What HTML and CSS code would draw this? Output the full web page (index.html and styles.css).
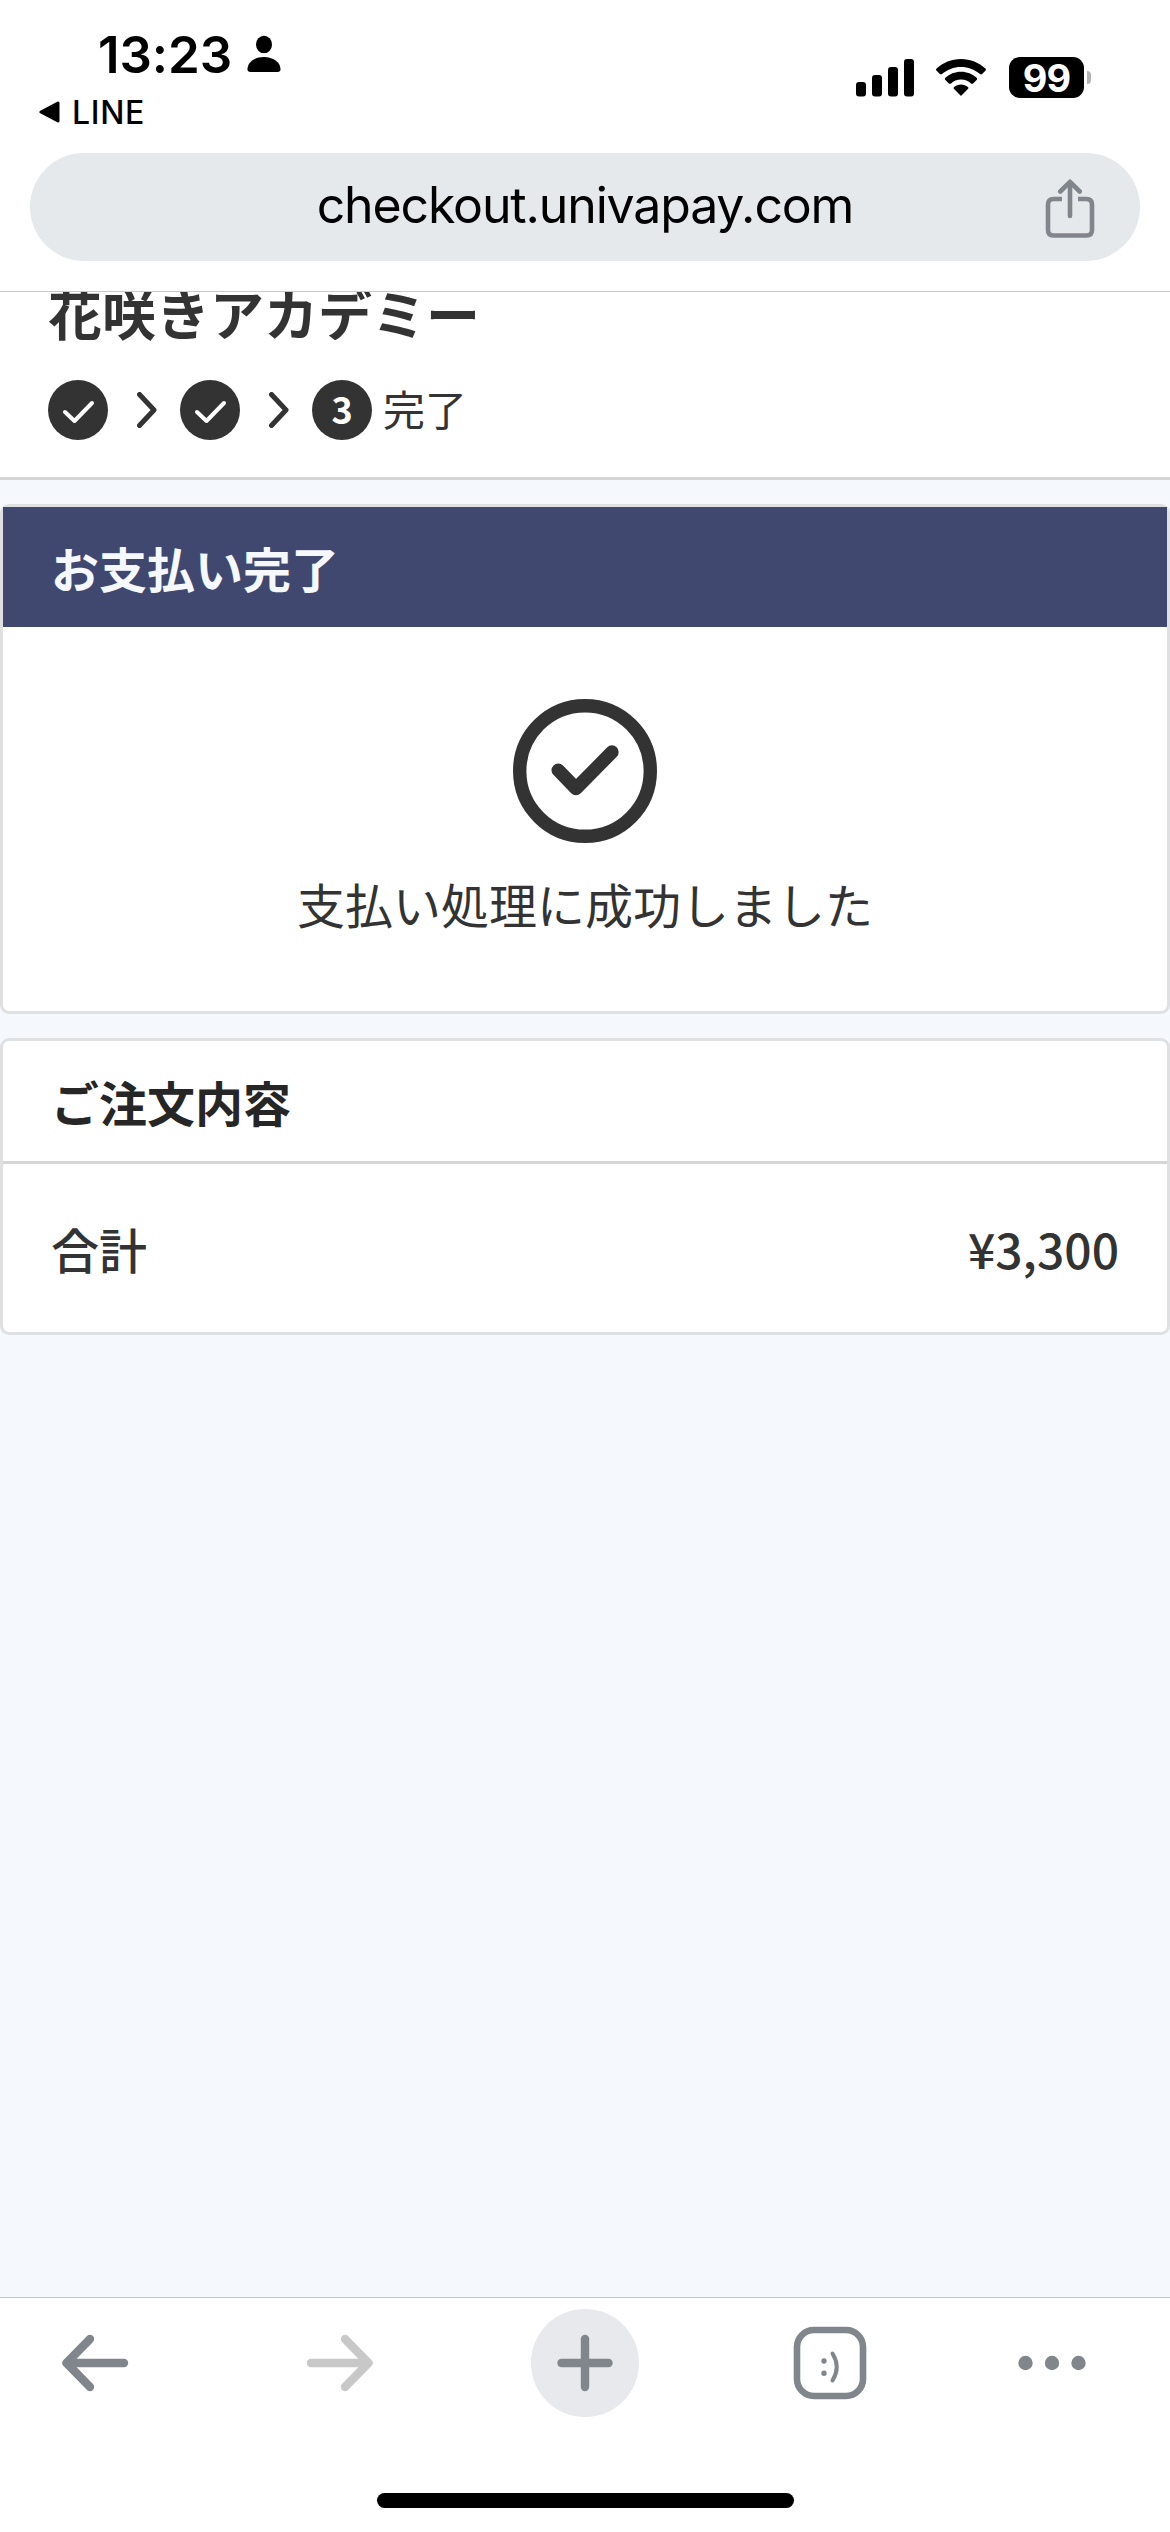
FILE: index.html
```html
<!DOCTYPE html>
<html lang="ja">
  <head>
    <meta charset="UTF-8" />
    <meta name="viewport" content="width=device-width, initial-scale=1.0" />
    <title>お支払い完了</title>
    <link rel="stylesheet" href="styles.css">
  </head>
  <body>
    <div class="screen">
      <div class="browser-top">
        <div class="status-bar">
          <div class="status-left">
            <div class="clock">
              <span class="time">13:23</span>
              <svg class="person" width="34" height="38" viewBox="0 0 34 38">
                <ellipse cx="17" cy="9.5" rx="8" ry="8.8" />
                <path d="M3.5 37C1.5 37 .5 36 .5 34.3C.5 27 8 22 17 22s16.500 5 16.500 12.300c0 1.700-1 2.700-3 2.700z" />
              </svg>
            </div>
            <div class="back-app">
              <svg width="22" height="22" viewBox="0 0 22 22">
                <path d="M2 11L19 2v18z" stroke="#000" stroke-width="3" stroke-linejoin="round" />
              </svg>
              <span>LINE</span>
            </div>
          </div>
          <div class="status-right">
            <svg class="signal" width="58" height="38" viewBox="0 0 58 38">
              <rect x="0" y="23" width="10" height="14.5" rx="3" />
              <rect x="16" y="16" width="10" height="21.5" rx="3" />
              <rect x="32" y="8" width="10" height="29.5" rx="3" />
              <rect x="48" y="0" width="10" height="37.5" rx="3" />
            </svg>
            <svg class="wifi" width="50" height="38" viewBox="0 0 50 38">
              <path d="M25 0C15.500 0 7 3.600.6 9.600c-.7.700-.7 1.500 0 2.200l3.300 3.300c.6.600 1.400.6 2.100 0C11 10.500 17.700 7.900 25 7.900s14 2.600 19 7.200c.7.600 1.500.6 2.100 0l3.300-3.300c.7-.7.7-1.500 0-2.200C43 3.600 34.500 0 25 0z" />
              <path d="M25 12.700c-6 0-11.500 2.300-15.600 6-.7.700-.7 1.500 0 2.200l3.500 3.500c.6.600 1.400.6 2.100 0 2.600-2.300 6.100-3.800 10-3.800s7.400 1.500 10 3.800c.7.600 1.500.6 2.100 0l3.500-3.500c.7-.7.7-1.500 0-2.200-4.100-3.700-9.600-6-15.600-6z" />
              <path d="M25 25.500c-2.600 0-5 .9-6.900 2.400-.7.600-.7 1.400 0 2.100l5.900 6.100c.6.700 1.400.7 2 0l5.900-6.100c.7-.7.7-1.500 0-2.100-1.900-1.500-4.300-2.400-6.900-2.400z" />
            </svg>
            <div class="battery">
              <span class="battery-level">99</span>
              <span class="battery-tip"></span>
            </div>
          </div>
        </div>
        <div class="url-bar">
          <span class="url">checkout.univapay.com</span>
          <svg class="share" width="50" height="60" viewBox="0 0 50 60">
            <path d="M17 20H8.500q-5.500 0-5.500 5.500v25.500q0 5.500 5.500 5.500h33q5.500 0 5.500-5.500V25.500q0-5.500-5.500-5.500H33" />
            <path d="M25 37V3.500M15.300 12.500L25 2.800l9.700 9.700" stroke-linecap="round" stroke-linejoin="round" />
          </svg>
        </div>
      </div>

      <div class="page">
        <div class="shop-header">
          <h1>花咲きアカデミー</h1>
          <div class="steps">
            <span class="step">
              <svg width="60" height="60" viewBox="0 0 60 60"><path d="M17 32l9.500 9L44 23" /></svg>
            </span>
            <svg class="chevron" width="20" height="36" viewBox="0 0 20 36"><path d="M2.500 2.500L17 18 2.500 33.500" /></svg>
            <span class="step">
              <svg width="60" height="60" viewBox="0 0 60 60"><path d="M17 32l9.500 9L44 23" /></svg>
            </span>
            <svg class="chevron" width="20" height="36" viewBox="0 0 20 36"><path d="M2.500 2.500L17 18 2.500 33.500" /></svg>
            <span class="step">3</span>
            <span class="step-name">完了</span>
          </div>
        </div>

        <div class="card">
          <h2 class="card-title primary">お支払い完了</h2>
          <div class="result">
            <svg width="144" height="144" viewBox="0 0 144 144">
              <circle cx="72" cy="72" r="65.3" />
              <path d="M45.200 71.200L63 89.500l36-36.500" />
            </svg>
            <p>支払い処理に成功しました</p>
          </div>
        </div>

        <div class="card">
          <h2 class="card-title">ご注文内容</h2>
          <div class="total">
            <span>合計</span>
            <span class="price">¥3,300</span>
          </div>
        </div>
      </div>

      <div class="toolbar">
        <div class="tools">
          <svg class="back" width="68" height="60" viewBox="0 0 68 60">
            <path d="M63 30H6M29 6L5.500 30 29 54" />
          </svg>
          <svg class="forward" width="68" height="60" viewBox="0 0 68 60">
            <path d="M5 30h57M39 6l23.500 24L39 54" />
          </svg>
          <div class="new-tab">
            <svg width="56" height="58" viewBox="0 0 56 58">
              <path d="M4.500 29h47M28 5v48" />
            </svg>
          </div>
          <svg class="tabs" width="74" height="74" viewBox="0 0 74 74">
            <rect x="4" y="4" width="66" height="66" rx="17" />
            <path d="M39.500 27.500q8.500 13.500 0 27" />
            <circle cx="31" cy="35" r="2.700" />
            <circle cx="31" cy="47.300" r="2.700" />
          </svg>
          <svg class="more" width="68" height="16" viewBox="0 0 68 16">
            <circle cx="7.500" cy="8" r="7.200" />
            <circle cx="34" cy="8" r="7.200" />
            <circle cx="60.500" cy="8" r="7.200" />
          </svg>
        </div>
        <div class="home-indicator"></div>
      </div>
    </div>
  </body>
</html>
```

FILE: styles.css
```css
* {
    box-sizing: border-box;
}

body {
    margin: 0;
    font-family: "Noto Sans CJK JP", "Noto Sans", sans-serif;
    color: #333;
    background: #f5f8fd;
}

svg {
    display: block;
    flex-shrink: 0;
}

h1, h2, p {
    margin: 0;
}

.screen {
    width: 1170px;
    height: 2532px;
    display: flex;
    flex-direction: column;
    overflow: hidden;
}

/* Status bar + address bar */

.browser-top {
    height: 292px;
    flex-shrink: 0;
    background: #fff;
    border-bottom: 1px solid #c8c9cb;
    font-family: Inter, sans-serif;
    color: #000;
}

.status-bar {
    height: 153px;
    display: flex;
    justify-content: space-between;
}

.status-left {
    padding: 24px 0 0 39px;
}

.clock {
    display: flex;
    align-items: center;
    padding-left: 59px;
    height: 60px;
}

.time {
    width: 149px;
    font-size: 51px;
    font-weight: 600;
    letter-spacing: -0.1px;
    white-space: nowrap;
}

.back-app {
    display: flex;
    align-items: center;
    gap: 11px;
    height: 40px;
    margin-top: 8px;
    font-size: 32px;
    font-weight: 500;
    letter-spacing: 0.7px;
}

.status-right {
    display: flex;
    align-items: center;
    height: 41px;
    margin: 57px 79px 0 0;
}

.wifi {
    margin: 0 23px 0 22px;
}

.battery {
    display: flex;
    align-items: center;
    gap: 3px;
}

.battery-level {
    width: 75px;
    height: 41px;
    border-radius: 11px;
    background: #000;
    color: #fff;
    font-size: 38px;
    font-weight: 700;
    line-height: 42px;
    letter-spacing: -1px;
    text-align: center;
}

.battery-tip {
    width: 4px;
    height: 13px;
    background: #b3b3b3;
    border-radius: 0 4px 4px 0;
}

.url-bar {
    display: flex;
    align-items: center;
    height: 108px;
    margin: 0 30px;
    padding: 0 45px 0 95px;
    border-radius: 54px;
    background: #e6e9ec;
}

.url {
    flex: 1;
    text-align: center;
    font-size: 50px;
    letter-spacing: -1.15px;
    line-height: 100px;
    padding-bottom: 4px;
}

.share {
    fill: none;
    stroke: #80868b;
    stroke-width: 4.6;
    margin-top: 4px;
}

/* Checkout page */

.page {
    flex: 1;
}

/* scrolled a little, so the shop name starts under the address bar */
.shop-header {
    height: 188px;
    padding: 0 48px;
    background: #fff;
    border-bottom: 3px solid #d6d6d6;
    overflow: hidden;
}

.shop-header h1 {
    margin-top: -18px;
    font-size: 54px;
    font-weight: 700;
    line-height: 78px;
}

.steps {
    display: flex;
    align-items: center;
    height: 60px;
    margin-top: 28px;
}

.step {
    width: 60px;
    height: 60px;
    border-radius: 50%;
    background: #333;
    color: #fff;
    font-size: 36px;
    font-weight: 700;
    line-height: 56px;
    text-align: center;
}

.step path {
    fill: none;
    stroke: #fff;
    stroke-width: 4;
    stroke-linecap: round;
    stroke-linejoin: round;
}

.chevron {
    margin: 0 23px 0 29px;
    fill: none;
    stroke: #333;
    stroke-width: 5;
    stroke-linecap: round;
    stroke-linejoin: round;
}

.step-name {
    height: 60px;
    margin-left: 11px;
    font-size: 42px;
    line-height: 56px;
}

.card {
    margin-top: 24px;
    background: #fff;
    border: 3px solid #dfe0e1;
    border-radius: 9px;
}

.card-title {
    height: 120px;
    padding: 0 48px;
    font-size: 48px;
    font-weight: 700;
    line-height: 120px;
    color: #262626;
}

.card-title.primary {
    background: #40486f;
    color: #f5f8fd;
}

.result {
    display: flex;
    flex-direction: column;
    align-items: center;
    height: 384px;
    padding-top: 72px;
    font-size: 48px;
}

.result p {
    margin-top: 24px;
    line-height: 72px;
}

.result svg {
    fill: none;
    stroke: #333;
    stroke-width: 13.4;
    stroke-linecap: round;
    stroke-linejoin: round;
}

.total {
    display: flex;
    justify-content: space-between;
    height: 171px;
    padding: 0 48px;
    border-top: 3px solid #d6d6d6;
    font-size: 48px;
    font-weight: 500;
    line-height: 168px;
}

/* Bottom toolbar */

.toolbar {
    height: 235px;
    flex-shrink: 0;
    background: #fff;
    border-top: 1px solid #c1c1c9;
}

.tools {
    display: flex;
    align-items: center;
    height: 108px;
    margin-top: 11px;
    padding-left: 61px;
    gap: 151px;
    fill: none;
    stroke: #80868b;
    stroke-width: 8.4;
    stroke-linecap: round;
    stroke-linejoin: round;
}

.back {
    margin-right: 26px;
}

.forward {
    margin-right: 6px;
    stroke: #c8c8c8;
}

.new-tab {
    display: flex;
    align-items: center;
    justify-content: center;
    width: 108px;
    height: 108px;
    margin-right: 3px;
    border-radius: 50%;
    background: #e8e9ed;
}

.tabs rect {
    stroke-width: 6.6;
}

.tabs path {
    stroke-width: 4;
}

.tabs circle,
.more circle {
    fill: #80868b;
    stroke: none;
}

.home-indicator {
    width: 417px;
    height: 15px;
    margin: 76px auto 0;
    border-radius: 8px;
    background: #000;
}
```
